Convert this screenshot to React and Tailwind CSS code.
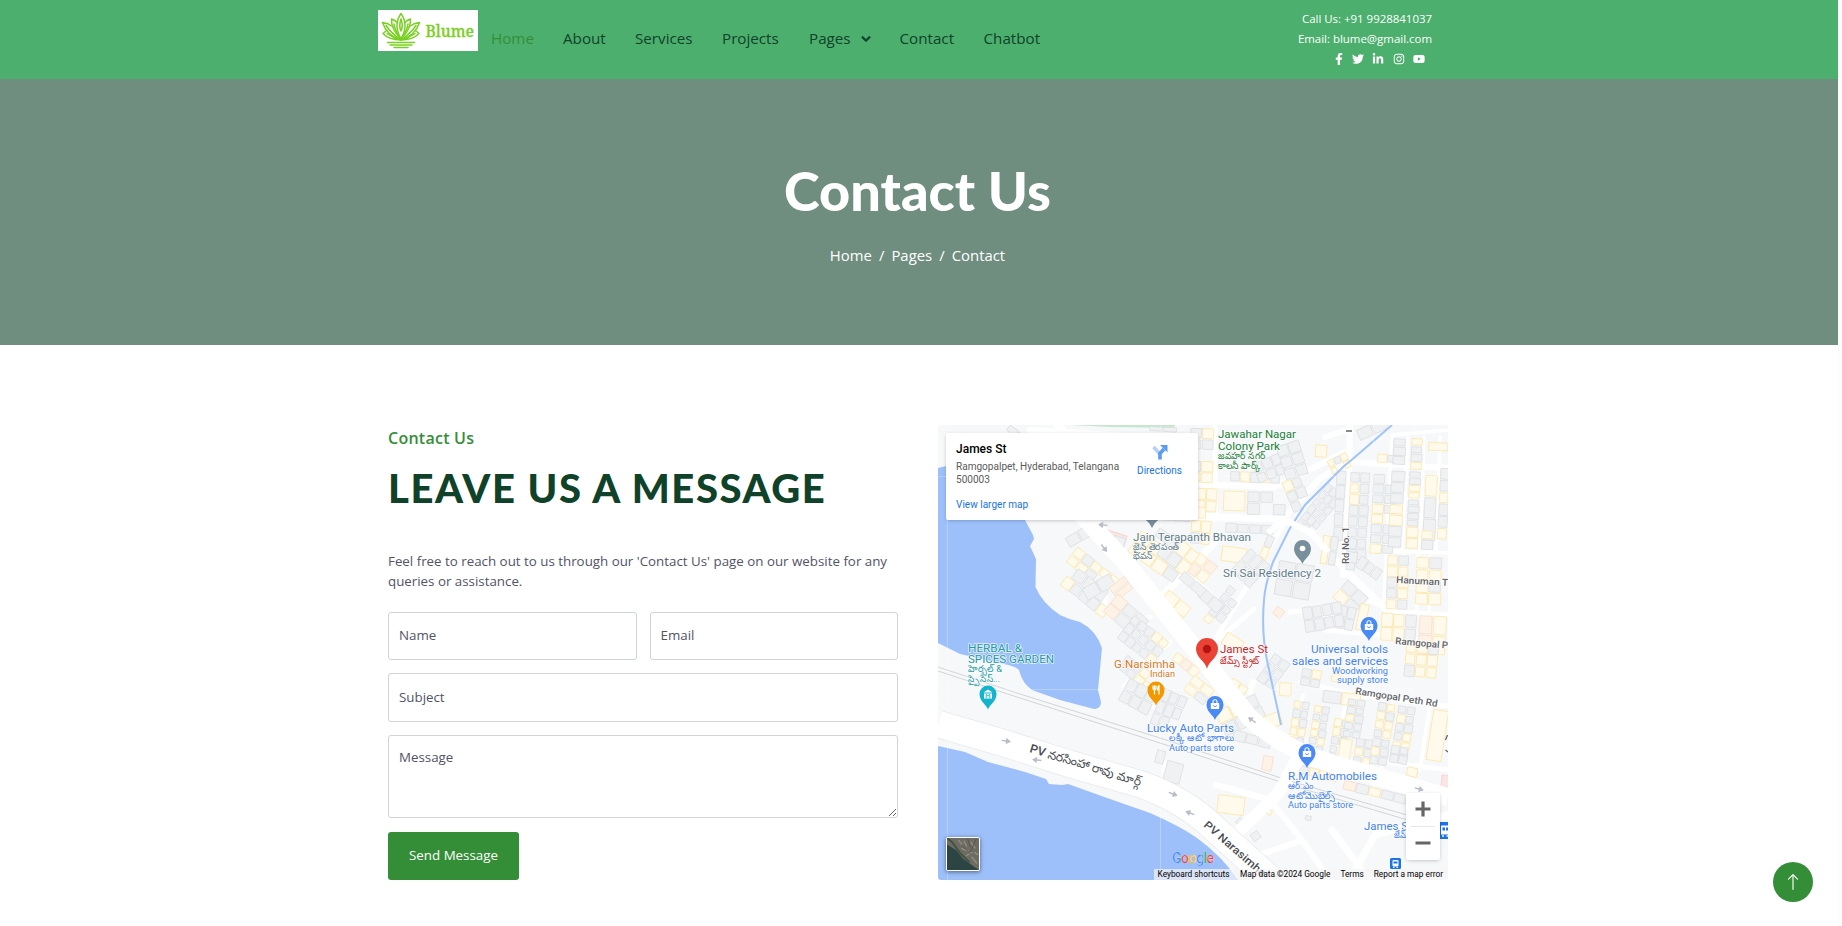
import React from "react";
import { FaChevronDown, FaFacebookF, FaTwitter, FaLinkedinIn, FaInstagram, FaYoutube } from "react-icons/fa";
import { BsArrowUp } from "react-icons/bs";

const NAV = [
  { label: "Home", width: "w-[72px]", color: "text-[#348e38]" },
  { label: "About", width: "w-[72px]", color: "text-[#0f4229]" },
  { label: "Services", width: "w-[87px]", color: "text-[#0f4229]" },
  { label: "Projects", width: "w-[87px]", color: "text-[#0f4229]" },
  { label: "Pages", width: "w-[90.500px]", color: "text-[#0f4229]", menu: true },
  { label: "Contact", width: "w-[84px]", color: "text-[#0f4229]" },
  { label: "Chatbot", width: "w-[70px]", color: "text-[#0f4229]" },
];

const FILLS = {
  G: ["#eff1f3", "#dcdfe3"],
  Y: ["#fffaec", "#fce6a8"],
  O: ["#fef1e6", "#f8dfc9"],
  P: ["#fbe4e2", "#f4d2cf"],
};

// x, y, angle, cell width, cell height, rows of building kinds
const BLOCKS = [
  [1010, 425, 35, 11, 7, ["GG"]],
  [1150, 426, 3, 14, 6, ["GG.G"]],
  [1191, 428, 2, 12, 11, ["GY", "GG", "..", "GY", "YY"]],
  [1196, 488, 3, 11, 12, ["YY", "YY"]],
  [1224, 491, 2, 22, 20, ["Y"]],
  [1248, 491, 2, 13, 12, ["GG", "G.G"]],
  [1231, 471, 3, 10, 11, ["GYGYG"]],
  [1192, 520, 5, 10, 12, ["YY", "GY"]],
  [1226, 523, 3, 12, 10, ["GGGG"]],
  [1223, 545, 8, 26, 17, ["Y"]],
  [1252, 464, -22, 10, 11, ["GGG", "GGG"]],
  [1276, 447, -18, 12, 12, ["GG", "GG", "GG"]],
  [1282, 483, -22, 10, 11, ["YG", "GG", "G"]],
  [1316, 444, 5, 13, 14, ["Y"]],
  [1327, 461, -25, 7, 8, ["YGY", "Y.Y"]],
  [1328, 483, 38, 7, 9, ["GGG", "GGG", "GGG", "GGG", "GGG", "GG"]],
  [1337, 471, 3, 10, 14, ["G", "G", "G", "G", "G"]],
  [1356, 430, -25, 16, 13, ["GG"]],
  [1351, 472, 3, 10, 11, ["GG", "YG", "YG", "GG", "GG", "GG", "GG", "GG", "G"]],
  [1374, 474, 3, 12, 10, ["G", "GG", "GG", "YG", "Y", "GG", "GG", "YG"]],
  [1378, 454, 3, 10, 9, ["YG"]],
  [1394, 438, 3, 13, 9, ["G", "G", "G"]],
  [1412, 438, 3, 12, 8, ["Y", "G", "G", "Y"]],
  [1429, 442, 3, 20, 9, ["Y"]],
  [1392, 471, 3, 14, 11, ["G", "G", "G", "Y", "Y", "G", "G"]],
  [1410, 471, 3, 12, 7, ["G", "G", "Y", "Y", "G", "G", "G", "G", "Y"]],
  [1426, 475, 3, 13, 22, ["Y", "G", "G"]],
  [1441, 468, 3, 10, 12, ["G", "G", "Y", "G", "G", "Y"]],
  [1407, 527, 2, 12, 11, ["Y", "Y"]],
  [1422, 530, 2, 12, 10, ["Y", "G"]],
  [1324, 535, 8, 8, 15, ["YG", "YG"]],
  [1347, 551, 8, 12, 12, ["G"]],
  [1362, 556, 35, 9, 13, ["GGG"]],
  [1388, 555, 2, 11, 11, ["YG", "YY", "GY", "GY", "YG"]],
  [1417, 557, 2, 13, 12, ["YG", "YY", "YG", "YY"]],
  [1348, 580, 42, 14, 12, ["GG", "YG"]],
  [1382, 613, 3, 12, 14, ["YYG", "YYG"]],
  [1420, 615, 3, 14, 20, ["OY", "OY"]],
  [1361, 603, 12, 10, 28, ["Y"]],
  [1340, 605, 12, 9, 12, ["GG", "GG"]],
  [1268, 535, 22, 8, 12, ["G", "Y", "Y", "G"]],
  [1251, 548, 42, 9, 16, ["GGG", "GGG"]],
  [1280, 560, 10, 18, 18, ["GG", "GG"]],
  [1278, 606, 38, 10, 10, ["O"]],
  [1302, 608, -10, 10, 13, ["GGGG", "GGGG"]],
  [1200, 552, 38, 12, 12, ["YO", "OY"]],
  [1230, 585, 38, 9, 9, ["G", "GG", "GG", "GG", "Y"]],
  [1205, 588, 42, 13, 12, ["GG"]],
  [1228, 632, 32, 20, 14, ["Y"]],
  [1107, 529, 18, 23, 19, ["P"]],
  [1115, 535, 18, 13, 14, ["G"]],
  [1142, 531, 35, 14, 13, ["YYYG", "YYYG"]],
  [1160, 528, 35, 14, 10, ["GGY"]],
  [1155, 510, 3, 18, 11, ["GG"]],
  [1181, 506, 3, 13, 12, ["GY"]],
  [1173, 533, 38, 12, 14, ["GYY", "GGY"]],
  [1169, 590, 38, 15, 14, ["YY", "YY"]],
  [1185, 571, 40, 15, 11, ["GG"]],
  [1065, 538, -30, 14, 12, ["GG"]],
  [1078, 547, 38, 11, 10, ["YGYYY", "YYG.."]],
  [1067, 576, 38, 11, 12, ["YGGGY"]],
  [1079, 568, 38, 13, 14, ["GGG"]],
  [1082, 589, -30, 16, 14, ["GG"]],
  [1109, 588, -38, 20, 8, ["O", "O"]],
  [1118, 594, 40, 14, 12, ["OGG", "OGG"]],
  [1135, 615, 38, 9, 10, ["GGGYY", "GGGGG", "GGGGY"]],
  [1128, 655, 38, 10, 9, ["GGY", "GGYY"]],
  [1130, 678, 28, 11, 13, ["GGG", "GGG"]],
  [1164, 688, 22, 9, 13, ["GGG", "GGG", "GG"]],
  [1178, 652, 38, 10, 11, ["YOY"]],
  [1195, 675, 38, 13, 10, ["YY", "YG"]],
  [1215, 712, -25, 15, 14, ["YYG", "GGG"]],
  [1235, 730, 14, 13, 11, ["GGG"]],
  [1158, 749, 15, 10, 15, ["G"]],
  [1168, 760, 15, 18, 22, ["G"]],
  [1219, 672, 30, 8, 7, ["O"]],
  [1233, 678, 32, 10, 10, ["YY"]],
  [1280, 682, 3, 13, 15, ["Y"]],
  [1275, 653, 35, 10, 11, ["GG", "GG", "GG"]],
  [1303, 668, 10, 10, 9, ["GY.Y", "GG"]],
  [1263, 717, -20, 17, 14, ["Y"]],
  [1295, 700, 9, 8, 9, ["YG", "GG", "YG", "YY", "YG", "YY"]],
  [1315, 705, 9, 8, 8, ["YG", "GG", "YG", "YG", "GY", "GG", "YG"]],
  [1324, 690, 7, 19, 13, ["GY"]],
  [1335, 718, 9, 8, 9, ["YG", "YG", "GG", "G", "G"]],
  [1349, 698, 9, 9, 8, ["GG", "GG", "YG", "GG", "GG"]],
  [1341, 738, 9, 13, 30, ["Y"]],
  [1357, 738, 9, 9, 9, ["GG", "YG", "GY", "GG"]],
  [1379, 702, 9, 9, 9, ["GY", "YG", "YY", "GY", "GG", "YG", "GG"]],
  [1399, 705, 9, 9, 9, ["GG", "YG", "GG", "GY", "YY", "GG"]],
  [1407, 641, 5, 11, 12, ["YYG", "YYY", "GYY"]],
  [1434, 709, 9, 16, 52, ["Y"]],
  [1392, 745, 9, 9, 9, ["GG", "GG"]],
  [1408, 766, 12, 12, 11, ["Y"]],
  [1301, 765, 14, 10, 9, ["GYYY"]],
  [1345, 780, 14, 13, 10, ["OGYGG"]],
  [1442, 775, 5, 12, 14, ["P"]],
  [1219, 794, 7, 28, 20, ["Y"]],
  [1264, 755, 10, 11, 16, ["O"]],
  [1250, 835, -35, 9, 9, ["G"]],
  [1240, 817, 40, 7, 8, ["G"]],
  [1268, 808, 28, 7, 7, ["Y"]],
  [1306, 815, 10, 7, 6, ["G"]],
];

function Buildings() {
  return BLOCKS.map(([x, y, angle, w, h, rows], i) => (
    <g key={i} transform={`translate(${x} ${y}) rotate(${angle})`}>
      {rows.map((row, r) =>
        [...row].map((kind, c) => {
          if (kind === ".") return null;
          const trim = ((i * 7 + r * 5 + c * 3) % 4) * 0.45;
          return (
            <rect
              key={`${r}-${c}`}
              x={c * w}
              y={r * h + trim * 0.5}
              width={w - 0.8 - trim * 0.6}
              height={h - 0.8 - trim}
              fill={FILLS[kind][0]}
              stroke={FILLS[kind][1]}
              strokeWidth="0.8"
            />
          );
        })
      )}
    </g>
  ));
}

const STREETS = [
  ["M1058 425L1085 462", 9],
  ["M1030 430L1130 436L1200 442", 6],
  ["M1190 484L1275 487L1345 452", 6],
  ["M1190 516L1283 519L1310 532L1350 575L1385 608", 7],
  ["M1215 425L1215 520", 5],
  ["M1350 425L1349 480L1343 575", 6],
  ["M1325 437L1347 430", 6],
  ["M1283 519L1320 478L1350 462L1448 468", 6],
  ["M1392 435L1448 430M1392 438L1384 600M1408 437L1402 550M1424 437L1420 550M1440 437L1436 550", 3.5],
  ["M1390 499L1448 500M1384 551L1448 553", 4],
  ["M1160 598L1215 542", 7],
  ["M1283 525L1215 640", 5],
  ["M1190 575L1212 596M1220 638L1254 609", 5],
  ["M1290 612L1330 608L1372 601L1390 611L1448 615", 5],
  ["M1325 610L1325 630L1380 635L1448 643", 5],
  ["M1404 555L1402 640M1418 555L1416 615M1430 555L1429 640", 3],
  ["M1300 682L1350 694L1448 706", 5],
  ["M1303 695L1290 740M1348 695L1332 760M1393 705L1380 775M1430 705L1420 770", 4],
  ["M1385 762L1448 770", 5],
  ["M1124 686L1160 711M1124 686L1170 642", 5],
  ["M1105 585L1105 612L1123 625L1150 617", 5],
  ["M1164 783L1165 763", 6],
  ["M1300 753L1277 795L1240 830", 12],
  ["M1216 785L1224 787L1270 800L1302 840L1240 862M1302 840L1330 880", 6],
  ["M1332 830L1358 865L1368 880M1448 815L1375 835L1355 870", 7],
  ["M1250 692L1253 682", 6],
];

function Pin({ x, y, color, children }) {
  return (
    <g transform={`translate(${x} ${y})`}>
      <path d="M0 0C-1.5-5-8.5-8-8.5-15.5A8.5 8.5 0 0 1 8.5-15.5C8.5-8 1.5-5 0 0Z" fill={color} />
      {children}
    </g>
  );
}

function Bag() {
  return (
    <>
      <rect x="-4.2" y="-17" width="8.4" height="6" rx="0.6" fill="#fff" />
      <path d="M-2-17v-1.2a2 2 0 0 1 4 0V-17" fill="none" stroke="#fff" strokeWidth="1.1" />
      <path d="M-1.5-14.8a1.5 1.5 0 0 0 3 0" fill="none" stroke="#4a8af4" strokeWidth="0.8" />
    </>
  );
}

// x, y, rendered width, size, color, text, rotation
const LABELS = [
  [1218, 438, 78, 11, "#188038", "Jawahar Nagar"],
  [1218, 449.5, 62, 11, "#188038", "Colony Park"],
  [1218, 459, 48, 9.5, "#188038", "జవహర్ నగర్"],
  [1218, 468.5, 43, 9.5, "#188038", "కాలనీ పార్క్"],
  [1133, 541, 118, 11, "#607d8b", "Jain Terapanth Bhavan"],
  [1133, 550, 46, 9.5, "#607d8b", "జైన్ తెరపంత్"],
  [1133, 559, 20, 9.5, "#607d8b", "భవన్"],
  [1223, 577, 98, 11, "#607d8b", "Sri Sai Residency 2"],
  [1349, 564, 37, 9.5, "#5f6368", "Rd No. 1", -90],
  [1396, 583, 52, 9.5, "#5f6368", "Hanuman T", 3],
  [1395, 644, 53, 9.5, "#5f6368", "Ramgopal P", 5],
  [1355, 694, 83, 9.5, "#5f6368", "Ramgopal Peth Rd", 9],
  [1311, 653, 77, 11, "#3f82f0", "Universal tools"],
  [1292, 665, 96, 11, "#3f82f0", "sales and services"],
  [1332, 674, 56, 9, "#3f82f0", "Woodworking"],
  [1337, 683, 51, 9, "#3f82f0", "supply store"],
  [1220, 653, 48, 11, "#c5221f", "James St"],
  [1220, 664, 39, 9.5, "#c5221f", "జేమ్స్ స్ట్రీట్"],
  [1114, 668, 61, 11, "#d77a28", "G.Narsimha"],
  [1150, 677, 25, 9, "#d77a28", "Indian"],
  [968, 652, 54, 11, "#239aa3", "HERBAL &"],
  [968, 663, 86, 11, "#239aa3", "SPICES GARDEN"],
  [968, 672, 34, 9.5, "#239aa3", "హెర్బల్ &"],
  [968, 682, 32, 9.5, "#239aa3", "స్పైసెస్..."],
  [1147, 732, 87, 11, "#3f82f0", "Lucky Auto Parts"],
  [1169, 741, 65, 9.5, "#3f82f0", "లక్కీ ఆటో భాగాలు"],
  [1169, 750.5, 65, 9, "#3f82f0", "Auto parts store"],
  [1288, 780, 89, 11, "#3f82f0", "R.M Automobiles"],
  [1288, 789, 26, 9.5, "#3f82f0", "ఆర్.ఎం"],
  [1288, 798.5, 47, 9.5, "#3f82f0", "ఆటోమొబైల్స్"],
  [1288, 807.5, 65, 9, "#3f82f0", "Auto parts store"],
  [1364, 829.5, 44, 11, "#3f82f0", "James S"],
  [1394, 838, 14, 9.5, "#3f82f0", "జేమ్"],
  [1029, 752, 116, 12, "#4a4d51", "PV నరసింహా రావు మార్గ్", 17],
  [1203, 826, 78, 11, "#4a4d51", "PV Narasimha", 41],
];

function MapCanvas() {
  return (
    <svg viewBox="938 425 510 455" className="block h-[455px] w-[510px]">
      <rect x="938" y="425" width="510" height="455" fill="#f7f8fa" />
      <path d="M1070 425H1175L1174 428L1110 427Z" fill="#c6e7cd" />
      <g fill="none" stroke="#fff" strokeLinecap="round" strokeLinejoin="round">
        {STREETS.map(([d, w]) => (
          <path key={d} d={d} strokeWidth={w} />
        ))}
      </g>
      <Buildings />
      <path d="M1392 425L1355 457L1343 467L1305 505L1290 528L1273 562Q1265 585 1264 600Q1261 635 1268 665L1281 725" fill="none" stroke="#9fc3fb" strokeWidth="2" />
      <path d="M1268 533L1283 519L1310 532L1328 552" fill="none" stroke="#fff" strokeWidth="6" strokeLinejoin="round" />
      <path d="M938 468L946 466L1000 480L1025 520L1033 535L1034 539L1030 546L1036 559L1035.500 587Q1042 603 1060 615Q1070 620 1080 622Q1096 630 1102 648L1098 690L1101 702Q1101 709 1094 709L1060 700L1032 690Q1022 683 1019 670Q1015 666 1004 664L960 654L938 643Z" fill="#9dc0fb" />
      <path d="M938 667L1020 694L1160 738L1290 781L1448 827M938 671L1020 698L1160 743L1290 785L1448 832" fill="none" stroke="#d2d4d6" strokeWidth="1" />
      <path d="M938 724L1000 742L1070 764L1140 784Q1185 800 1215 829L1280 888" fill="none" stroke="#e7e9eb" strokeWidth="28" />
      <path d="M938 724L1000 742L1070 764L1140 784Q1185 800 1215 829L1280 888" fill="none" stroke="#fff" strokeWidth="26.500" />
      <path d="M1055 485L1125 562L1207 664L1250 718Q1285 750 1330 763L1448 797" fill="none" stroke="#fff" strokeWidth="18" strokeLinejoin="round" />
      <path d="M1300 757L1277 795L1240 830" fill="none" stroke="#fff" strokeWidth="12" />
      <path d="M938 746L965 752L988 762L1025 772L1046 779L1049 784L1062 785L1068 784L1110 799L1150 813Q1180 826 1197 838Q1222 856 1238 880H938Z" fill="#9dc0fb" />
      <path d="M947.500 425V880M1160.500 425V880M938 476.500H1448M938 689.500H1448M1373.500 425V880" stroke="#fff" strokeOpacity="0.25" strokeWidth="1" />
      <g fill="#b7bdc9">
        {[[1006, 741, 8], [1037, 760, 187], [1173, 794, 20], [1190, 813, 200], [1252, 720, 215], [1419, 789, 15], [1104, 548, 52], [1103, 525, 185]].map(([x, y, a]) => (
          <path key={`${x}-${y}`} d="M-4.500-.7H0V-3.200L5 0L0 3.200V.7H-4.500Z" transform={`translate(${x} ${y}) rotate(${a})`} />
        ))}
      </g>
      <g fontFamily="Roboto, 'Noto Sans', sans-serif" fontWeight="400" stroke="#fff" strokeOpacity="0.75" strokeWidth="1.600" paintOrder="stroke" strokeLinejoin="round">
        {LABELS.map(([x, y, w, size, color, text, rotate]) => (
          <text
            key={`${x}-${y}`}
            transform={`translate(${x} ${y}) rotate(${rotate || 0})`}
            textLength={w}
            lengthAdjust="spacingAndGlyphs"
            fontSize={size}
            fontWeight={rotate ? 500 : 400}
            fill={color}
          >
            {text}
          </text>
        ))}
      </g>
      <path d="M1143.500 515H1160.500Q1159 520 1155 523L1152 528L1149 523Q1145 520 1143.500 515Z" fill="#78909c" />
      <Pin x={1302.500} y={564} color="#78909c"><circle cy="-15.500" r="2.800" fill="#fff" /></Pin>
      <Pin x={1369} y={641} color="#4a8af4"><Bag /></Pin>
      <Pin x={1215} y={720} color="#4a8af4"><Bag /></Pin>
      <Pin x={1307} y={768} color="#4a8af4"><Bag /></Pin>
      <Pin x={1156} y={705.500} color="#f29900">
        <path d="M-3-20v3a1.500 1.500 0 0 0 3 0v-3M-1.500-20v9M3-11v-9q-1.500 1-1.500 4.500H3" fill="none" stroke="#fff" strokeWidth="1.200" />
      </Pin>
      <Pin x={988} y={709.500} color="#12b5cb">
        <path d="M-4.500-17L0-20L4.500-17ZM-4-16h8v5h-8z" fill="#fff" />
        <path d="M-1.800-11.500v-3.500l1.800 1.700l1.800-1.700v3.500" fill="none" stroke="#12b5cb" strokeWidth="0.900" />
      </Pin>
      <path d="M1207 669C1205.500 661 1196 658 1196 649A11 11 0 0 1 1218 649C1218 658 1208.500 661 1207 669Z" fill="#ea4335" />
      <circle cx="1207" cy="649" r="4.200" fill="#b31412" />
      <g>
        <rect x="1390" y="858" width="11" height="11" rx="1.500" fill="#1a73e8" />
        <rect x="1392.500" y="860" width="6" height="6.500" rx="1" fill="#fff" />
        <path d="M1393.500 861.500h4v2h-4z" fill="#1a73e8" />
        <path d="M1393 867.500h1.500M1396.500 867.500h1.500" stroke="#fff" />
        <path d="M1436 822h12v17h-12z" fill="#1a73e8" />
        <path d="M1441 825.500h7v9h-7z" fill="#fff" />
        <path d="M1442.500 827.500h2.500v3h-2.500zM1446 827.500h2v3h-2z" fill="#1a73e8" />
        <path d="M1442 836h2M1446.500 836h1.500" stroke="#fff" strokeWidth="1.500" />
      </g>
      <path d="M1447.500 735l-2 5M1445.500 750l2.500 2M1346 431h6" stroke="#5f6368" strokeWidth="1.300" fill="none" />
    </svg>
  );
}

function Logo() {
  return (
    <div className="flex h-[41px] w-[100px] items-center overflow-hidden bg-white pl-[2.500px]">
      <svg viewBox="0 0 40 37" className="h-[37px] w-[40px] shrink-0" fill="none" stroke="#79d021" strokeWidth="1.500" strokeLinejoin="round" strokeLinecap="round">
        <path d="M20 27Q12 13 20 1.500Q28 13 20 27ZM20 7Q17.500 14 20 19Q22.500 14 20 7" />
        <path d="M20 27Q10 17 10.500 7Q14 8 16.500 11M20 27Q30 17 29.500 7Q26 8 23.500 11" />
        <path d="M13 12Q14 19 20 27Q26 19 27 12" />
        <path d="M20 28Q6 24 1.500 10.500Q7 11 11.500 14.500M20 28Q34 24 38.500 10.500Q33 11 28.500 14.500M5 13.500Q10 21 20 28Q30 21 35 13.500" />
        <path d="M5 19L2 21.500Q8 28 20 28Q32 28 38 21.500L35 19M6 21.500Q12 26 20 28Q28 26 34 21.500" />
        <path d="M6.500 30.500H33.500M9 33H31M13 35.500H27" />
      </svg>
      <svg viewBox="0 0 52 24" className="ml-[4px] h-[24px] w-[52px] shrink-0">
        <text x="0.500" y="18" textLength="48.500" lengthAdjust="spacingAndGlyphs" fontFamily="'Noto Serif', 'Liberation Serif', serif" fontSize="16.500" fontWeight="500" fill="#79d021" stroke="#79d021" strokeWidth="0.300">Blume</text>
      </svg>
    </div>
  );
}

function Field({ label, type = "text" }) {
  return (
    <input
      type={type}
      aria-label={label}
      placeholder={label}
      className="h-full w-full min-w-0 rounded-[3px] border border-[#ced4da] bg-white px-[10px] pb-[2px] text-[13.330px] text-[#525368] placeholder:text-[#525368]"
    />
  );
}

export default function App() {
  return (
    <div className="flex h-[926px] w-full overflow-hidden bg-white font-['Open_Sans','Noto_Sans',sans-serif]">
      <div className="min-w-0 flex-1">
        <header className="flex h-[79px] bg-[#4caf6e] pl-[378px]">
          <div className="pt-[10px]"><Logo /></div>
          <nav className="flex h-[77px] items-center pl-[13px] text-[15.200px]">
            {NAV.map((item) => (
              <a key={item.label} href="#" className={`flex items-center ${item.width} ${item.color} shrink-0`}>
                {item.label}
                {item.menu && <FaChevronDown className="mt-[2px] ml-[10px] text-[10px]" stroke="currentColor" strokeWidth="40" />}
              </a>
            ))}
          </nav>
          <div className="mr-[406px] ml-auto flex flex-col items-end pt-[9px] text-[11.450px] leading-[20px] text-white">
            <span>Call Us: +91 9928841037</span>
            <span>Email: blume@gmail.com</span>
            <div className="flex h-[20px] items-center gap-[8.500px] pr-[7px] text-[12px]">
              <FaFacebookF className="w-[8px]" />
              <FaTwitter />
              <FaLinkedinIn />
              <FaInstagram />
              <FaYoutube />
            </div>
          </div>
        </header>

        <section className="flex h-[266px] flex-col items-center bg-[#6f8e7f] pt-[76px] pr-[3px] text-white">
          <h1 className="font-['Lato',sans-serif] text-[54px] leading-[71px] font-black">Contact Us</h1>
          <div className="mt-[18px] flex gap-[7px] text-[14.900px] leading-[22px]">
            <a href="#">Home</a>
            <span>/</span>
            <a href="#">Pages</a>
            <span>/</span>
            <span>Contact</span>
          </div>
        </section>

        <main className="flex gap-[40px] pt-[80px] pl-[388px]">
          <div className="flex w-[510px] shrink-0 flex-col">
            <p className="text-[16px] leading-[26px] font-semibold tracking-[0.250px] text-[#348e38]">Contact Us</p>
            <h2 className="mt-[12px] font-['Lato',sans-serif] text-[40px] leading-[50px] font-black tracking-[1.580px] whitespace-nowrap text-[#0f4229]">LEAVE US A MESSAGE</h2>
            <p className="mt-[38px] h-[40px] text-[13.330px] leading-[20px] whitespace-nowrap text-[#525368]">
              Feel free to reach out to us through our 'Contact Us' page on our website for any
              <br />
              queries or assistance.
            </p>
            <form className="mt-[21px] flex flex-col gap-[13px]">
              <div className="grid h-[48px] grid-cols-2 gap-[13px]">
                <Field label="Name" />
                <Field label="Email" type="email" />
              </div>
              <div className="h-[49px]"><Field label="Subject" /></div>
              <textarea
                aria-label="Message"
                placeholder="Message"
                className="block h-[83px] w-full rounded-[3px] border border-[#ced4da] bg-white px-[10px] pt-[12px] text-[13.330px] text-[#525368] placeholder:text-[#525368]"
              />
              <button type="button" className="mt-[1px] h-[48px] w-[131px] rounded-[3px] bg-[#348e38] text-[13.330px] font-medium text-white">
                Send Message
              </button>
            </form>
          </div>

          <div className="relative h-[455px] w-[510px] overflow-hidden rounded-[3px] font-['Roboto',sans-serif]">
            <MapCanvas />
            <div className="absolute top-[8px] left-[8px] flex h-[87px] w-[252px] justify-between rounded-[2px] bg-white pt-[8px] pr-[16px] pl-[10px] shadow-[0_1px_4px_-1px_rgba(0,0,0,0.3)]">
              <div className="text-[10.050px]">
                <div className="text-[12px] leading-[16px] font-medium text-black">James St</div>
                <div className="mt-[4px] leading-[12.500px] whitespace-nowrap text-[#5b5b5b]">
                  Ramgopalpet, Hyderabad, Telangana
                  <br />
                  500003
                </div>
                <a href="#" className="mt-[13px] block leading-[12px] text-[#1a73e8]">View larger map</a>
              </div>
              <div className="flex flex-col items-center pt-[3px]">
                <svg viewBox="0 0 16 16" className="h-[16px] w-[16px]">
                  <path d="M8 10L1.500 3" stroke="#b2d0fb" strokeWidth="3.400" />
                  <path d="M8 15.500V9.500L12 5" stroke="#5b9bf0" strokeWidth="3.600" fill="none" />
                  <path d="M8 1H15.500V8.500Z" fill="#5b9bf0" />
                </svg>
                <a href="#" className="mt-[5px] text-[10px] leading-[12px] text-[#1a73e8]">Directions</a>
              </div>
            </div>
            <svg viewBox="0 0 34 34" className="absolute bottom-[9px] left-[8px] h-[34px] w-[34px] rounded-[2px] border border-white shadow-[0_1px_4px_rgba(0,0,0,0.5)]">
              <rect width="34" height="34" fill="#6e6c62" />
              <path d="M0 7L10 13L17 22L24 27L34 34H0Z" fill="#2c4543" />
              <path d="M0 0L5 4L14 16L24 26" stroke="#3e5344" strokeWidth="2" fill="none" />
              <path d="M12 2l4 5M18 3l3 6M25 4l5 7M15 11l8 3M20 19l7-4M26 20l6 7M29 15l4 3" stroke="#8f8b80" strokeWidth="1.600" />
              <path d="M22 1l3 9M16 8l9 9M31 1l-6 14" stroke="#55564f" strokeWidth="1" />
            </svg>
            <div className="absolute bottom-[14px] left-[234px] text-[14px] leading-[16px] font-medium tracking-[-0.5px] [-webkit-text-stroke:0.2px_white]">
              <span className="text-[#4285f4]">G</span>
              <span className="text-[#ea4335]">o</span>
              <span className="text-[#fbbc04]">o</span>
              <span className="text-[#4285f4]">g</span>
              <span className="text-[#34a853]">l</span>
              <span className="text-[#ea4335]">e</span>
            </div>
            <div className="absolute right-[8px] bottom-[20px] flex h-[67px] w-[34px] flex-col items-center rounded-[2px] bg-white shadow-[0_1px_4px_-1px_rgba(0,0,0,0.3)]">
              <svg viewBox="0 0 34 67" className="h-full w-full">
                <path d="M9.500 16H24.500M17 8.500V23.500M9.500 50H24.500" stroke="#666" strokeWidth="3.200" />
                <path d="M5 33.500H29" stroke="#e6e6e6" />
              </svg>
            </div>
            <div className="absolute right-0 bottom-0 flex h-[11px] items-center bg-[#f5f5f5]/70 text-[8.300px] whitespace-nowrap text-black">
              <span className="pr-[5.500px] pl-[4px]">Keyboard shortcuts</span>
              <span className="px-[5px]">Map data ©2024 Google</span>
              <span className="px-[5px]">Terms</span>
              <span className="px-[5px]">Report a map error</span>
            </div>
          </div>
        </main>
      </div>
      <div className="h-full w-[4px] shrink-0 bg-[#fcfcfc]" />
      <a href="#" aria-label="Back to top" className="fixed right-[29px] bottom-[24px] flex size-[40px] items-center justify-center rounded-full bg-[#348e38] text-[18px] text-white">
        <BsArrowUp />
      </a>
    </div>
  );
}
